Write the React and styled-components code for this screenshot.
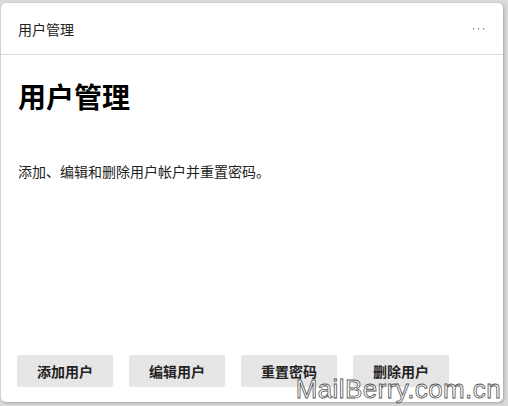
import React from 'react'
import styled, { createGlobalStyle } from 'styled-components'

const GlobalStyle = createGlobalStyle`
    html, body {
        margin: 0;
        padding: 0;
        background: #d9d9d9;
    }
    body {
        font-family: "Noto Sans CJK SC", "Noto Sans", sans-serif;
    }
`

const Page = styled.div`
    width: 508px;
    height: 406px;
    padding: 3px 5px 4px 1px;
    box-sizing: border-box;
    position: relative;
    overflow: hidden;
`

const Card = styled.div`
    height: 100%;
    background: #fff;
    border-radius: 5px;
    box-shadow: 1px 1px 3px rgba(0, 0, 0, 0.25);
    display: flex;
    flex-direction: column;
`

const Header = styled.div`
    height: 51px;
    border-bottom: 1px solid #dedede;
    display: flex;
    align-items: center;
    justify-content: space-between;
    padding: 0 18px 0 17px;
`

const HeaderTitle = styled.div`
    font-size: 14px;
    color: #222;
`

const MoreButton = styled.div`
    display: flex;
    align-items: center;
    height: 12px;
`

const Body = styled.div`
    flex: 1;
    padding: 21px 17px 0;
`

const Title = styled.h1`
    margin: 0;
    font-size: 28px;
    font-weight: 700;
    line-height: 40px;
    color: #000;
`

const Description = styled.p`
    margin: 45px 0 0;
    font-size: 14px;
    line-height: 20px;
    color: #222;
`

const Footer = styled.div`
    display: flex;
    gap: 16px;
    padding: 0 16px 15px;
`

const Button = styled.button`
    width: 96px;
    height: 32px;
    border: none;
    border-radius: 2px;
    background: #e6e6e6;
    font-family: inherit;
    font-size: 14px;
    font-weight: 600;
    color: #222;
    padding: 0;
`

const Watermark = styled.div`
    position: absolute;
    right: 7px;
    bottom: 2px;
    font-family: "Liberation Sans", sans-serif;
    font-size: 26px;
    letter-spacing: 0.4px;
    color: #fff;
    -webkit-text-stroke: 0.8px #555;
    line-height: 30px;
`

const actions = ['添加用户', '编辑用户', '重置密码', '删除用户']

export default function App () {
    return (
        <Page>
            <GlobalStyle />
            <Card>
                <Header>
                    <HeaderTitle>用户管理</HeaderTitle>
                    <MoreButton>
                        <svg width='13' height='4' viewBox='0 0 13 4'>
                            <rect x='1' y='1' width='1.2' height='1.6' fill='#6d8fc9' />
                            <rect x='6' y='1' width='1.2' height='1.6' fill='#6d8fc9' />
                            <rect x='11' y='1' width='1.2' height='1.6' fill='#6d8fc9' />
                        </svg>
                    </MoreButton>
                </Header>
                <Body>
                    <Title>用户管理</Title>
                    <Description>添加、编辑和删除用户帐户并重置密码。</Description>
                </Body>
                <Footer>
                    {actions.map(a => <Button key={a}>{a}</Button>)}
                </Footer>
            </Card>
            <Watermark>MailBerry.com.cn</Watermark>
        </Page>
    )
}
